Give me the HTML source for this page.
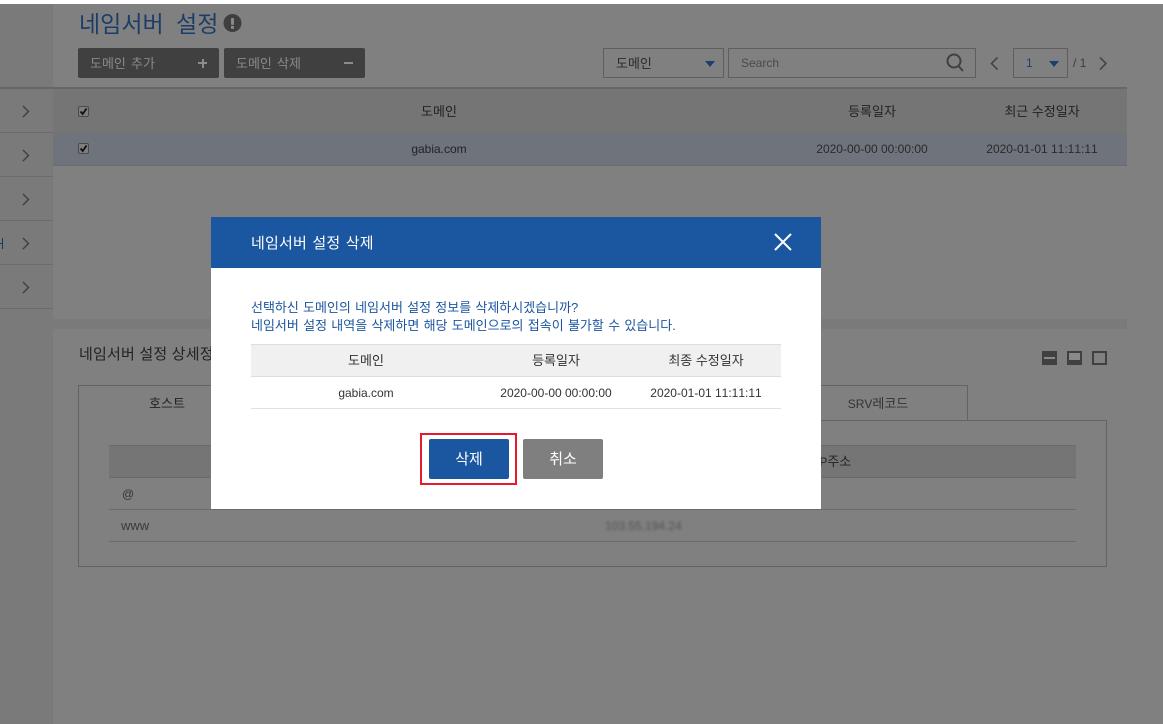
<!DOCTYPE html>
<html lang="ko"><head><meta charset="utf-8"><title>네임서버 설정</title>
<style>
html,body{margin:0;padding:0;width:1163px;height:724px;overflow:hidden;background:#808080;}
body{position:relative;font-family:"Liberation Sans","Noto Sans CJK KR",sans-serif;font-size:13px;color:#222;font-kerning:none;}
div,span,svg{position:absolute;box-sizing:border-box;}
.t{white-space:nowrap;line-height:16px;}
.c{text-align:center;}
.l{font-size:12px;}
b{font-weight:normal;font-size:12px;}
</style></head><body>
<div style="left:0;top:0;width:1163px;height:4px;background:#fff"></div>
<div style="left:0;top:4px;width:53px;height:720px;background:#7a7a7a"></div>
<div style="left:53px;top:4px;width:1074px;height:720px;background:#808080"></div>
<div style="left:53px;top:319px;width:1074px;height:10px;background:#7a7a7a"></div>

<div class="t" style="left:79px;top:8px;font-size:23px;line-height:32px;color:#1d3d68;word-spacing:6px">네임서버 설정</div>
<svg style="left:223px;top:14px" width="19" height="19"><circle cx="9.5" cy="9" r="9" fill="#3f3f3f"/><rect x="8" y="4" width="3" height="7" rx="1" fill="#8a8a8a"/><rect x="8" y="12" width="3" height="2.8" fill="#8a8a8a"/></svg>

<div style="left:78px;top:48px;width:141px;height:30px;background:#404040;border-radius:2px"></div>
<div class="t" style="left:90px;top:56px;color:#8a8a8a;word-spacing:1.5px">도메인 추가</div>
<div style="left:198px;top:62px;width:9px;height:2px;background:#8c8c8c"></div>
<div style="left:202px;top:59px;width:2px;height:9px;background:#8c8c8c"></div>
<div style="left:224px;top:48px;width:141px;height:30px;background:#404040;border-radius:2px"></div>
<div class="t" style="left:236px;top:56px;color:#8a8a8a;word-spacing:1.5px">도메인 삭제</div>
<div style="left:344px;top:62px;width:9px;height:2px;background:#8c8c8c"></div>

<div style="left:603px;top:48px;width:121px;height:30px;border:1px solid #5f5f5f"></div>
<div class="t" style="left:616px;top:56px;color:#2a2a2a">도메인</div>
<svg style="left:705px;top:61px" width="11" height="7"><path d="M0 0H10L5 6Z" fill="#1c3f70"/></svg>
<div style="left:728px;top:48px;width:248px;height:30px;border:1px solid #5f5f5f"></div>
<div class="t l" style="left:741px;top:55px;color:#4a4a4a">Search</div>
<svg style="left:945px;top:52px" width="20" height="21" fill="none" stroke="#404040" stroke-width="2"><circle cx="9" cy="9" r="6.5"/><path d="M13.5 14L18 19"/></svg>
<svg style="left:989px;top:56px" width="11" height="15" fill="none" stroke="#454545" stroke-width="1.6"><path d="M8.5 1.5L2.5 7.5L8.5 13.5"/></svg>
<div style="left:1013px;top:48px;width:55px;height:30px;border:1px solid #5f5f5f"></div>
<div class="t l" style="left:1026px;top:55px;color:#1c3f70">1</div>
<svg style="left:1049px;top:61px" width="11" height="7"><path d="M0 0H10L5 6Z" fill="#1c3f70"/></svg>
<div class="t l" style="left:1073px;top:55px;color:#3c3c3c">/ 1</div>
<svg style="left:1098px;top:56px" width="11" height="15" fill="none" stroke="#454545" stroke-width="1.6"><path d="M2 1.5L8 7.5L2 13.5"/></svg>

<div style="left:0;top:87px;width:1127px;height:2px;background:#666"></div>
<div style="left:53px;top:89px;width:1074px;height:44px;background:#757575"></div>
<div style="left:53px;top:133px;width:1074px;height:32px;background:#6f747c"></div>
<div style="left:53px;top:165px;width:1074px;height:1px;background:#6b6b6b"></div>
<div style="left:0;top:132px;width:53px;height:1px;background:#6c6c6c"></div>
<div style="left:0;top:176px;width:53px;height:1px;background:#6c6c6c"></div>
<div style="left:0;top:220px;width:53px;height:1px;background:#6c6c6c"></div>
<div style="left:0;top:264px;width:53px;height:1px;background:#6c6c6c"></div>
<div style="left:0;top:308px;width:53px;height:1px;background:#6c6c6c"></div>
<svg style="left:22px;top:105px" width="8" height="14" fill="none" stroke="#3c3c3c" stroke-width="1.3"><path d="M1 1L6.5 6.5L1 12"/></svg>
<svg style="left:22px;top:149px" width="8" height="14" fill="none" stroke="#3c3c3c" stroke-width="1.3"><path d="M1 1L6.5 6.5L1 12"/></svg>
<svg style="left:22px;top:193px" width="8" height="14" fill="none" stroke="#3c3c3c" stroke-width="1.3"><path d="M1 1L6.5 6.5L1 12"/></svg>
<svg style="left:22px;top:237px" width="8" height="14" fill="none" stroke="#3c3c3c" stroke-width="1.3"><path d="M1 1L6.5 6.5L1 12"/></svg>
<svg style="left:22px;top:281px" width="8" height="14" fill="none" stroke="#3c3c3c" stroke-width="1.3"><path d="M1 1L6.5 6.5L1 12"/></svg>
<div style="left:2px;top:238px;width:1px;height:11px;background:#123a5c"></div>
<div style="left:0;top:243px;width:2px;height:1px;background:#333"></div>

<svg style="left:78px;top:106px" width="12" height="12"><rect x=".5" y=".5" width="10" height="10" rx="1.5" fill="#7e7e7e" stroke="#4a4a4a"/><path d="M2.5 5.5L4.7 8L8.5 2.5" fill="none" stroke="#111" stroke-width="1.8"/></svg>
<svg style="left:78px;top:143px" width="12" height="12"><rect x=".5" y=".5" width="10" height="10" rx="1.5" fill="#7e7e7e" stroke="#4a4a4a"/><path d="M2.5 5.5L4.7 8L8.5 2.5" fill="none" stroke="#111" stroke-width="1.8"/></svg>
<div class="t c" style="left:339px;top:104px;width:200px;color:#222">도메인</div>
<div class="t c l" style="left:339px;top:141px;width:200px;color:#222">gabia.com</div>
<div class="t c" style="left:792px;top:104px;width:160px;color:#222">등록일자</div>
<div class="t c l" style="left:792px;top:141px;width:160px;color:#2a2a2a">2020-00-00 00:00:00</div>
<div class="t c" style="left:962px;top:104px;width:160px;color:#222">최근 수정일자</div>
<div class="t c l" style="left:962px;top:141px;width:160px;color:#2a2a2a">2020-01-01 11:11:11</div>

<div class="t" style="left:79px;top:347px;font-size:15px;letter-spacing:.2px;color:#222">네임서버 설정 상세정보</div>
<div style="left:1042px;top:351px;width:15px;height:14px;background:#404040"></div>
<div style="left:1044px;top:357px;width:11px;height:2px;background:#8a8a8a"></div>
<div style="left:1067px;top:351px;width:15px;height:14px;background:#404040"></div>
<div style="left:1069px;top:353px;width:11px;height:7px;background:#8a8a8a"></div>
<div style="left:1092px;top:351px;width:15px;height:14px;border:2px solid #404040"></div>

<div style="left:78px;top:385px;width:890px;height:36px;border:1px solid #636363;border-bottom:0"></div>
<div style="left:78px;top:420px;width:1029px;height:147px;border:1px solid #636363"></div>
<div style="left:79px;top:386px;width:176px;height:36px;background:#808080"></div>
<div class="t c" style="left:117px;top:396px;width:100px;color:#222">호스트</div>
<div class="t c" style="left:808px;top:396px;width:140px;color:#333"><b>SRV</b>레코드</div>

<div style="left:109px;top:445px;width:967px;height:33px;background:#757575;border-top:1px solid #6a6a6a;border-bottom:1px solid #6a6a6a"></div>
<div style="left:109px;top:509px;width:967px;height:1px;background:#6a6a6a"></div>
<div style="left:109px;top:541px;width:967px;height:1px;background:#6a6a6a"></div>
<div class="t l" style="left:122px;top:486px;color:#333">@</div>
<div class="t" style="left:121px;top:518px;color:#3a3a3a">www</div>
<div class="t" style="left:816px;top:454px;color:#222"><b>IP</b>주소</div>
<div class="t l" style="left:605px;top:518px;color:#555;filter:blur(1.2px)">103.55.194.24</div>

<div style="left:211px;top:217px;width:610px;height:292px;background:#fff"></div>
<div style="left:211px;top:217px;width:610px;height:51px;background:#1b56a0"></div>
<div class="t" style="left:251px;top:234px;color:#fff;font-size:15px;line-height:20px;letter-spacing:.2px;word-spacing:1px">네임서버 설정 삭제</div>
<svg style="left:774px;top:233px" width="18" height="18" fill="none" stroke="#fff" stroke-width="2"><path d="M1 1L17 17M17 1L1 17"/></svg>
<div class="t" style="left:251px;top:300px;color:#1b56a0;word-spacing:.6px">선택하신 도메인의 네임서버 설정 정보를 삭제하시겠습니까?</div>
<div class="t" style="left:251px;top:318px;color:#1b56a0;word-spacing:.66px">네임서버 설정 내역을 삭제하면 해당 도메인으로의 접속이 불가할 수 있습니다.</div>
<div style="left:251px;top:344px;width:530px;height:33px;background:#f0f0f0;border-top:1px solid #ddd;border-bottom:1px solid #ddd"></div>
<div style="left:251px;top:408px;width:530px;height:1px;background:#e0e0e0"></div>
<div class="t c" style="left:266px;top:353px;width:200px;color:#333">도메인</div>
<div class="t c" style="left:476px;top:353px;width:160px;color:#333">등록일자</div>
<div class="t c" style="left:626px;top:353px;width:160px;color:#333">최종 수정일자</div>
<div class="t c l" style="left:266px;top:385px;width:200px;color:#333">gabia.com</div>
<div class="t c l" style="left:476px;top:385px;width:160px;color:#333">2020-00-00 00:00:00</div>
<div class="t c l" style="left:626px;top:385px;width:160px;color:#333">2020-01-01 11:11:11</div>
<div style="left:420px;top:433px;width:97px;height:52px;border:2px solid #e8192c"></div>
<div class="c" style="left:429px;top:439px;width:80px;height:40px;background:#1b56a0;border-radius:2px;color:#fff;font-size:15px;line-height:42px">삭제</div>
<div class="c" style="left:523px;top:439px;width:80px;height:40px;background:#7f7f7f;border-radius:2px;color:#fff;font-size:15px;line-height:42px">취소</div>
</body></html>
